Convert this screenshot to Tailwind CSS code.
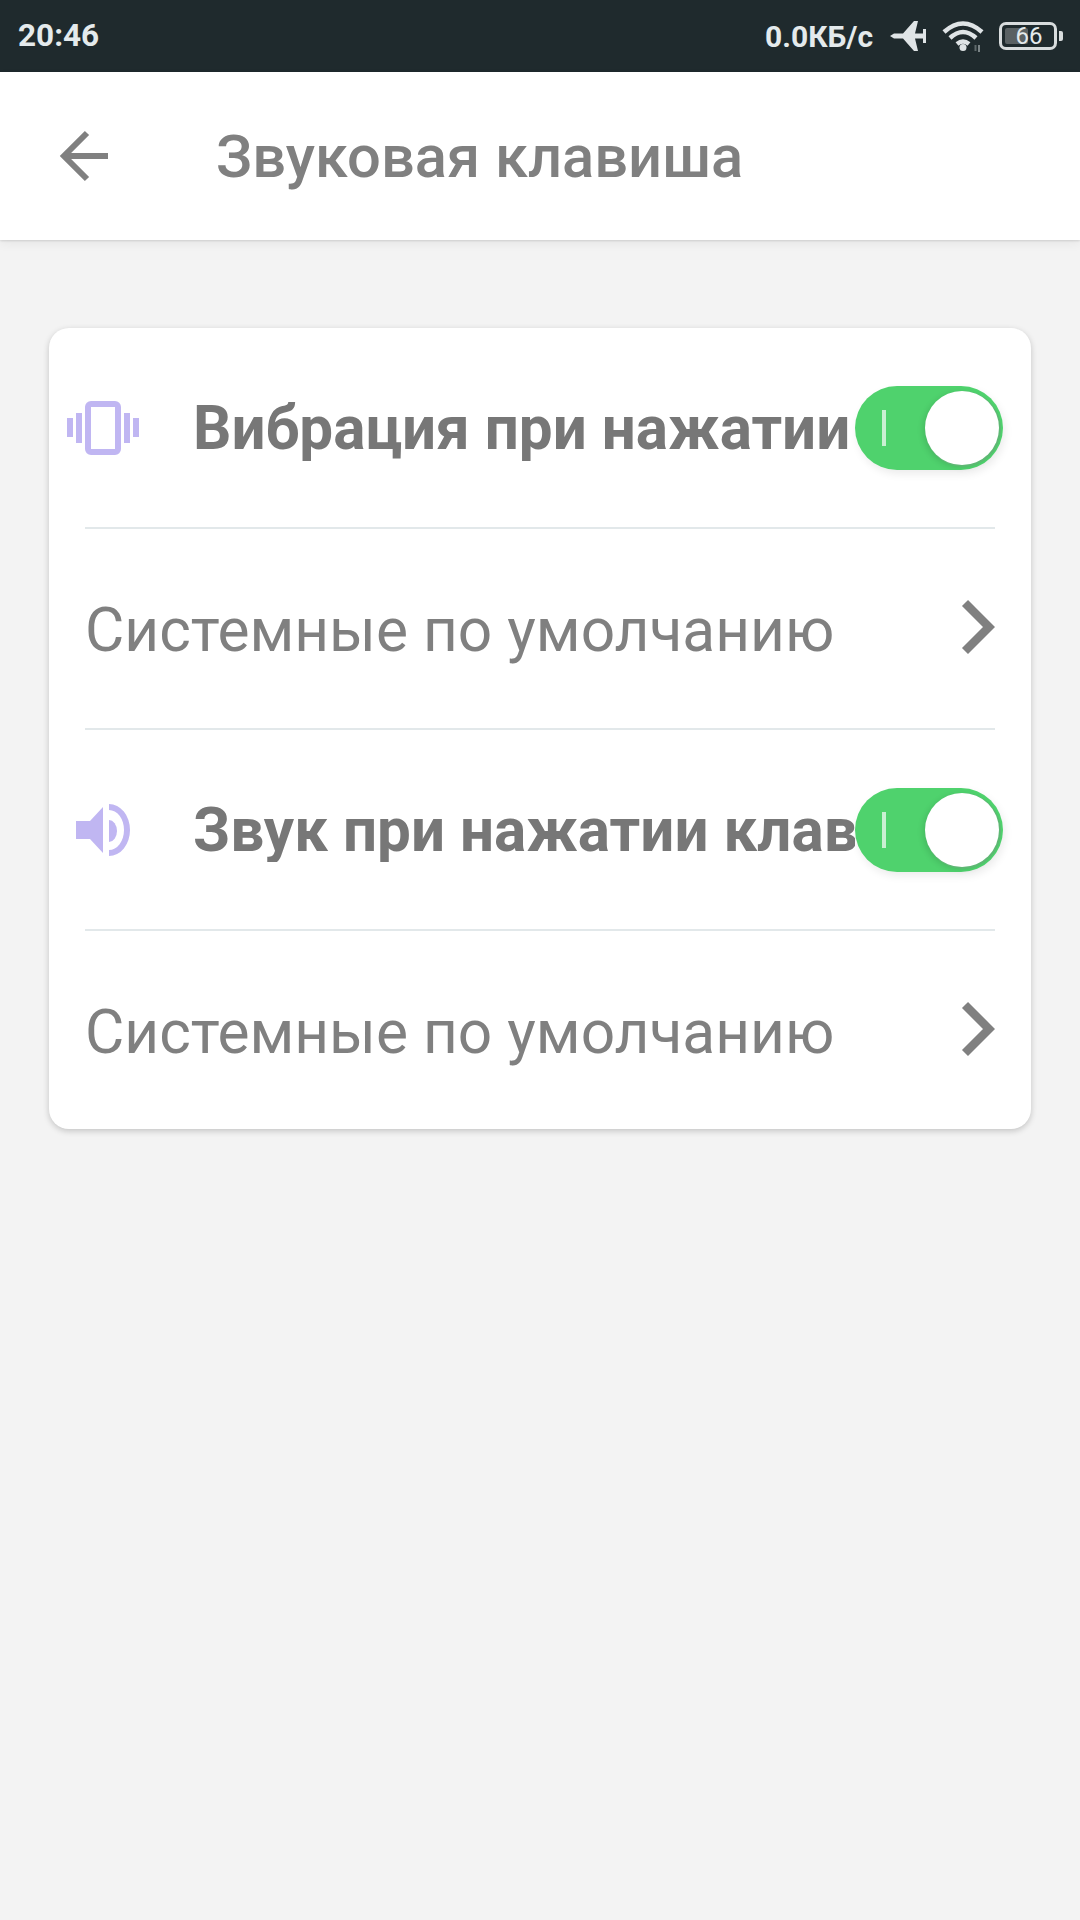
<!DOCTYPE html>
<html lang="ru">
<head>
<meta charset="UTF-8">
<meta name="viewport" content="width=device-width, initial-scale=1.0">
<title>Звуковая клавиша</title>
<script src="https://cdn.jsdelivr.net/npm/@tailwindcss/browser@4"></script>
</head>
<body class="bg-[#f3f3f3] font-['Roboto',sans-serif] w-[1080px] h-[1920px] overflow-hidden">

<!-- Status bar -->
<div class="h-[72px] bg-[#1f2a2d] flex items-center pl-[18px] pr-[17px] text-[#e4eaec]">
  <span class="text-[31.500px] font-bold flex-1">20:46</span>
  <span class="text-[30px] font-bold w-[125px]">0.0КБ/с</span>
  <svg class="w-[36px] h-[30px] mr-[16px]" viewBox="0 0 36 30" fill="#dfe4e6">
    <path d="M0 15 L4 12.500 H13 L24 0 H28 L25 12.500 H33 V8 H36 V22 H33 V17.500 H25 L28 30 H24 L13 17.500 H4 Z"/>
  </svg>
  <svg class="w-[42px] h-[32px] mr-[15px]" viewBox="0 0 42 32" fill="none" stroke="#dfe4e6" stroke-width="4.500">
    <path d="M2 12 Q21 -5 40 12"/>
    <path d="M8 18 Q21 6 34 18"/>
    <path d="M15 24 Q21 19 27 24"/>
    <circle cx="21" cy="27.500" r="3.500" fill="#dfe4e6" stroke="none"/>
    <path d="M37 25 V32" stroke-width="1.500" stroke="#9aa3a5"/>
    <path d="M33.500 25 V31" stroke-width="2" stroke="#5f696b"/>
  </svg>
  <div class="relative w-[58px] h-[28px] border-[3px] border-[#d8dcdd] rounded-[7px] mr-[2px]">
    <div class="absolute left-[3px] top-[3px] bottom-[3px] w-[23px] bg-[#5a6163] rounded-[2px]"></div>
    <span class="absolute inset-0 flex items-center justify-center text-[24px] leading-none pl-[2px] text-[#e4eaec]">66</span>
  </div>
  <div class="w-[4px] h-[10px] bg-[#d8dcdd] rounded-r-[2px]"></div>
</div>

<!-- Header -->
<div class="h-[168px] bg-white flex items-center shadow-[0_1px_2px_rgba(0,0,0,0.12),0_4px_10px_rgba(0,0,0,0.05)]">
  <svg class="ml-[58px] w-[52px] h-[52px]" viewBox="0 0 52 52" fill="none" stroke="#808080" stroke-width="6">
    <path d="M50 26 H5"/>
    <path d="M29 3 L6 26 L29 49"/>
  </svg>
  <h1 class="ml-[106px] pt-[4px] text-[59.700px] font-medium text-[#808080] leading-none whitespace-nowrap">Звуковая клавиша</h1>
</div>

<!-- Card -->
<div class="mt-[88px] mx-[49px] bg-white rounded-[20px] shadow-[0_2px_6px_rgba(0,0,0,0.2)]">

  <div class="h-[199px] flex items-center pr-[28px]">
    <div class="w-[144px] pl-[18px] shrink-0">
      <svg class="w-[72px] h-[54px]" viewBox="0 0 72 54" fill="#c0b6f2">
        <rect x="0" y="17" width="6" height="19"/>
        <rect x="9" y="12" width="6" height="30"/>
        <rect x="21" y="3" width="30" height="48" rx="3" fill="none" stroke="#c0b6f2" stroke-width="6"/>
        <rect x="57" y="12" width="6" height="30"/>
        <rect x="66" y="17" width="6" height="19"/>
      </svg>
    </div>
    <span class="flex-1 min-w-0 whitespace-nowrap pt-[4px] text-[60.200px] font-bold text-[#777777] leading-none">Вибрация при нажатии</span>
    <div class="relative shrink-0 w-[148px] h-[84px] rounded-full bg-[#4fd26d] shadow-[2px_4px_8px_rgba(0,0,0,0.08)]">
      <div class="absolute left-[27px] top-[24px] w-[4px] h-[36px] bg-[#c9f0d2]"></div>
      <div class="absolute right-[4px] top-[5px] w-[74px] h-[74px] rounded-full bg-white shadow-[1px_1px_0_1px_#5db873,-2px_2px_6px_rgba(0,0,0,0.12)]"></div>
    </div>
  </div>

  <div class="mx-[36px] h-[2px] bg-[#e2e8ea]"></div>

  <div class="h-[199px] flex items-center pl-[36px] pr-[36px]">
    <span class="flex-1 whitespace-nowrap pt-[6px] text-[60.400px] text-[#808080] leading-none">Системные по умолчанию</span>
    <svg class="w-[34px] h-[56px] mb-[3px]" viewBox="0 0 34 56" fill="none" stroke="#808080" stroke-width="8.500">
      <path d="M4 4 L28 28 L4 52"/>
    </svg>
  </div>

  <div class="mx-[36px] h-[2px] bg-[#e2e8ea]"></div>

  <div class="h-[199px] flex items-center pr-[28px]">
    <div class="w-[144px] pl-[27px] shrink-0">
      <svg class="w-[54px] h-[52px]" viewBox="0 0 54 52" fill="#c0b6f2">
        <path d="M0 17 H14 L27 3 V49 L14 35 H0 Z"/>
        <path d="M33 16 A8 11 0 0 1 33 38 Z"/>
        <path d="M33 0 A21 26 0 0 1 33 52 V46 A15 20 0 0 0 33 6 Z"/>
      </svg>
    </div>
    <span class="flex-1 min-w-0 overflow-hidden whitespace-nowrap pt-[4px] text-[60.200px] font-bold text-[#777777] leading-none">Звук при нажатии клавиш</span>
    <div class="relative shrink-0 w-[148px] h-[84px] rounded-full bg-[#4fd26d] shadow-[2px_4px_8px_rgba(0,0,0,0.08)]">
      <div class="absolute left-[27px] top-[24px] w-[4px] h-[36px] bg-[#c9f0d2]"></div>
      <div class="absolute right-[4px] top-[5px] w-[74px] h-[74px] rounded-full bg-white shadow-[1px_1px_0_1px_#5db873,-2px_2px_6px_rgba(0,0,0,0.12)]"></div>
    </div>
  </div>

  <div class="mx-[36px] h-[2px] bg-[#e2e8ea]"></div>

  <div class="h-[198px] flex items-center pl-[36px] pr-[36px]">
    <span class="flex-1 whitespace-nowrap pt-[6px] text-[60.400px] text-[#808080] leading-none">Системные по умолчанию</span>
    <svg class="w-[34px] h-[56px] mb-[3px]" viewBox="0 0 34 56" fill="none" stroke="#808080" stroke-width="8.500">
      <path d="M4 4 L28 28 L4 52"/>
    </svg>
  </div>

</div>

</body>
</html>
